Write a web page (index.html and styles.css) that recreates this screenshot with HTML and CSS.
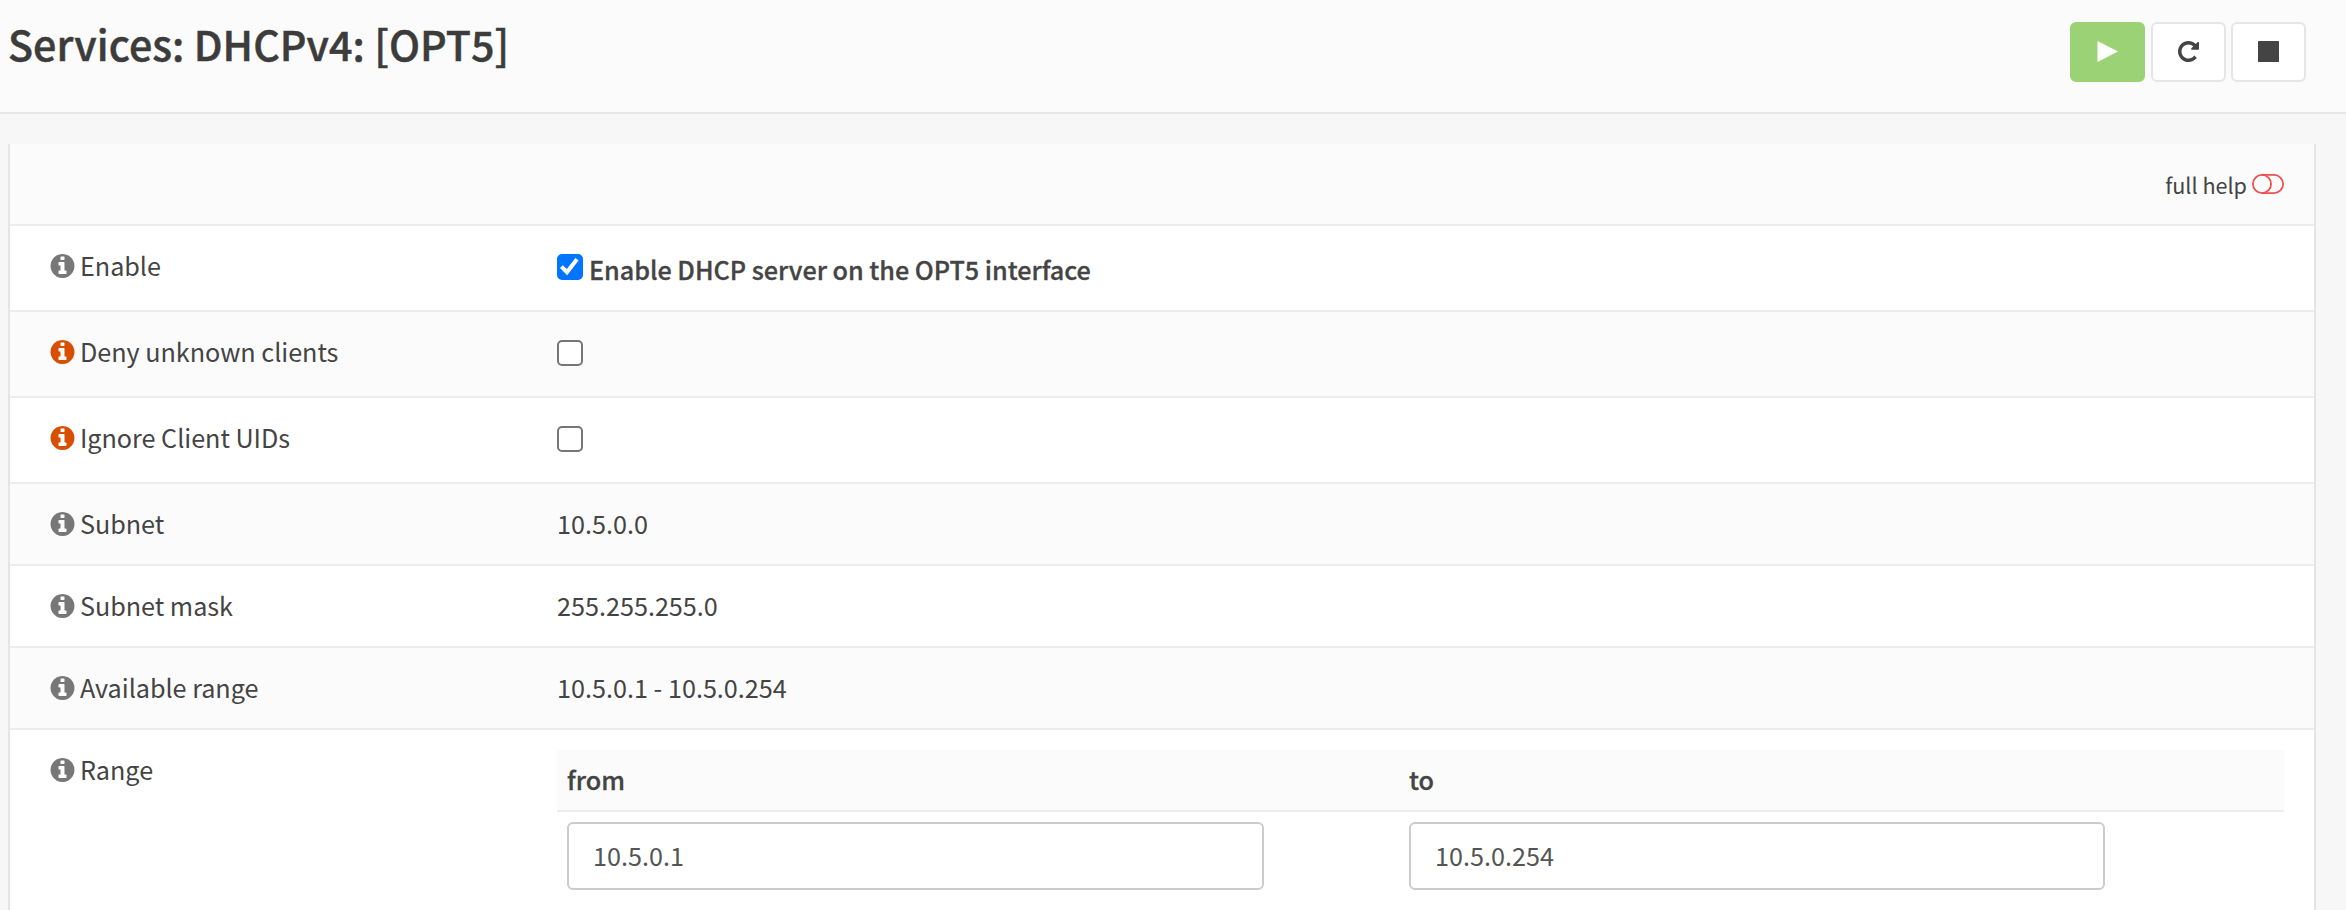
FILE: index.html
```html
<!DOCTYPE html>
<html lang="en">
<head>
<meta charset="utf-8">
<title>Services: DHCPv4: [OPT5]</title>
<link rel="stylesheet" href="styles.css">
</head>
<body>
<svg class="sprite" aria-hidden="true">
  <symbol id="info" viewBox="128 128 1536 1536"><path d="M1152 1376v-160q0-14-9-23t-23-9h-96v-512q0-14-9-23t-23-9h-320q-14 0-23 9t-9 23v160q0 14 9 23t23 9h96v320h-96q-14 0-23 9t-9 23v160q0 14 9 23t23 9h448q14 0 23-9t9-23zm-128-896v-160q0-14-9-23t-23-9h-192q-14 0-23 9t-9 23v160q0 14 9 23t23 9h192q14 0 23-9t9-23zm640 416q0 209-103 385.500t-279.500 279.500-385.500 103-385.500-103-279.500-279.500-103-385.500 103-385.500 279.500-279.500 385.500-103 385.500 103 279.500 279.500 103 385.500z"/></symbol>
</svg>
<header class="page-head">
  <h1 class="page-title">Services: DHCPv4: [OPT5]</h1>
  <div class="actions">
    <button class="btn btn-start" aria-label="Start"><svg class="btn-icon" viewBox="0 0 21 21"><path d="M.5 0L20.500 10.200v.6L.5 21z"/></svg></button>
    <button class="btn" aria-label="Restart"><svg class="btn-icon" viewBox="128 128 1536 1536"><path d="M1664 256v448q0 26-19 45t-45 19h-448q-42 0-59-40-17-39 14-69l138-138q-148-137-349-137-104 0-198.500 40.500t-163.500 109.500-109.500 163.500-40.500 198.500 40.500 198.500 109.500 163.500 163.500 109.500 198.500 40.500q119 0 225-52t179-147q7-10 23-12 15 0 25 9l137 138q9 8 9.500 20.500t-7.500 22.500q-109 132-264 204.500t-327 72.500q-156 0-298-61t-245-164-164-245-61-298 61-298 164-245 245-164 298-61q147 0 284.500 55.500t244.500 156.500l130-129q29-31 70-14 39 17 39 59z"/></svg></button>
    <button class="btn" aria-label="Stop"><svg class="btn-icon" viewBox="0 0 21 21"><rect width="21" height="21" rx=".4"/></svg></button>
  </div>
</header>
<main class="panel">
  <div class="help-row"><span class="help-text">full help</span><svg class="toggle" viewBox="0 0 32 20"><rect x=".9" y=".9" width="30.200" height="18.200" rx="9.100"/><path d="M10 .9a9.100 9.100 0 0 1 0 18.200"/></svg></div>
  <div class="row tall"><div class="label"><svg class="info"><use href="#info"/></svg>Enable</div><label class="value checkline"><input class="check" type="checkbox" checked><strong class="check-text">Enable DHCP server on the OPT5 interface</strong></label></div>
  <div class="row tall alt"><div class="label"><svg class="info on"><use href="#info"/></svg>Deny unknown clients</div><div class="value checkline"><input class="check" type="checkbox"></div></div>
  <div class="row tall"><div class="label"><svg class="info on"><use href="#info"/></svg>Ignore Client UIDs</div><div class="value checkline"><input class="check" type="checkbox"></div></div>
  <div class="row alt"><div class="label"><svg class="info"><use href="#info"/></svg>Subnet</div><div class="value">10.5.0.0</div></div>
  <div class="row"><div class="label"><svg class="info"><use href="#info"/></svg>Subnet mask</div><div class="value">255.255.255.0</div></div>
  <div class="row alt"><div class="label"><svg class="info"><use href="#info"/></svg>Available range</div><div class="value">10.5.0.1 - 10.5.0.254</div></div>
  <div class="row range"><div class="label"><svg class="info"><use href="#info"/></svg>Range</div>
    <div class="range-table">
      <div class="range-head"><strong>from</strong><strong>to</strong></div>
      <div class="range-body"><input class="field" type="text" value="10.5.0.1"><input class="field" type="text" value="10.5.0.254"></div>
    </div>
  </div>
</main>
</body>
</html>
```
FILE: styles.css
```css
* { box-sizing: border-box; }
body {
  margin: 0;
  height: 910px;
  overflow: hidden;
  background: #f7f7f7;
  color: #444;
  font-family: "Noto Sans CJK SC", "Noto Sans", sans-serif;
  font-size: 25.200px;
  line-height: 38px;
}
.sprite { display: none; }
.page-head {
  display: flex;
  justify-content: space-between;
  height: 114px;
  padding: 22px 40px 0 8px;
  background: #fbfbfb;
  border-bottom: 2px solid #e7e7e7;
}
.page-title {
  margin: -3px 0 0;
  color: #3c3c3b;
  font-size: 41.200px;
  font-weight: 500;
  letter-spacing: .05px;
  line-height: 48px;
  white-space: nowrap;
  -webkit-text-stroke: .5px #3c3c3b;
}
.actions { display: flex; gap: 5.500px; }
.btn {
  display: flex;
  align-items: center;
  justify-content: center;
  width: 75px;
  height: 60px;
  padding: 0 0 1px;
  background: #fff;
  border: 2px solid #e5e5e5;
  border-radius: 6px;
}
.btn-start { background: #9bd275; border-color: #9bd275; }
.btn-icon { width: 21px; height: 21px; fill: #444; }
.btn-start .btn-icon { fill: #fff; }
.panel {
  height: 766px;
  margin: 30px 30px 0 8px;
  background: #fff;
  border: solid #e5e5e5;
  border-width: 0 2px;
}
.help-row {
  display: flex;
  justify-content: flex-end;
  gap: 5px;
  height: 80px;
  padding: 22px 30px 0 0;
  background: #fbfbfb;
  font-size: 21.600px;
}
.toggle { width: 32px; height: 20px; margin-top: 8px; fill: none; stroke: #f0504e; stroke-width: 1.800; }
.row {
  display: grid;
  grid-template-columns: 507px 1fr;
  height: 82px;
  padding: 20px 30px 0 40px;
  border-top: 2px solid #ededed;
}
.tall { height: 86px; }
.alt { background: #fbfbfb; }
.label { display: flex; gap: 5px; white-space: nowrap; letter-spacing: -.03px; }
.info { width: 25px; height: 24px; margin-top: 8px; fill: #777; }
.info.on { fill: #d94f00; }
.checkline { display: flex; gap: 6px; }
.check {
  appearance: none;
  width: 26px;
  height: 26px;
  margin: 8px 0 0;
  background: #fff;
  border: 2px solid #767676;
  border-radius: 5px;
}
.check:checked { display: grid; place-items: center; background: #0075ff; border-color: #0075ff; }
.check:checked::before {
  content: "";
  width: 20px;
  height: 20px;
  background: #fff;
  clip-path: polygon(0 55%, 14% 41%, 34% 60%, 77% 5%, 93% 17%, 36% 91%);
}
strong { font-weight: 500; -webkit-text-stroke: .3px #444; }
.check-text { padding-top: 4px; letter-spacing: -.03px; }
.range { height: 180px; }
.range-head { display: grid; grid-template-columns: 842px 1fr; height: 62px; padding: 10px; background: #fbfbfb; border-bottom: 2px solid #ededed; }
.range-body { display: flex; gap: 145px; padding: 10px; }
.field {
  width: 697px;
  height: 68px;
  padding: 0 24px 2px;
  background: #fff;
  border: 2px solid #ccc;
  border-radius: 6px;
  color: #555;
  font: inherit;
}
.field:last-child { width: 696px; }
```
